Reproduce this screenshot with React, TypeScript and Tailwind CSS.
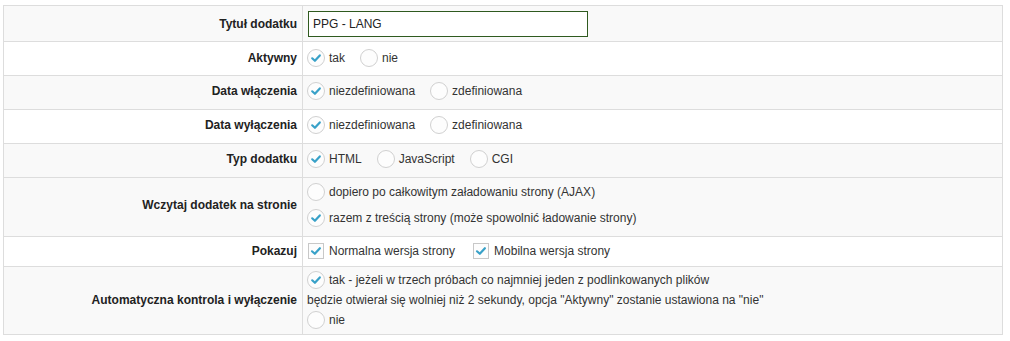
import React from 'react';

const Radio: React.FC<{ checked?: boolean }> = ({ checked }) => (
  <svg width="18" height="18" viewBox="0 0 18 18" className="shrink-0">
    <circle cx="9" cy="9" r="8.5" fill="#fdfdfd" stroke="#d0d0d0" />
    {checked && (
      <path d="M5.2 9.3 L7.9 11.8 L12.8 6.4" fill="none" stroke="#38a1c8" strokeWidth="2.2" strokeLinecap="round" strokeLinejoin="round" />
    )}
  </svg>
);

const Checkbox: React.FC<{ checked?: boolean }> = ({ checked }) => (
  <svg width="16" height="16" viewBox="0 0 16 16" className="shrink-0">
    <rect x="0.5" y="0.5" width="15" height="15" fill="#fdfdfd" stroke="#c8c8c8" />
    {checked && (
      <path d="M4 8.3 L6.8 10.8 L11.9 5.2" fill="none" stroke="#38a1c8" strokeWidth="2.2" strokeLinecap="round" strokeLinejoin="round" />
    )}
  </svg>
);

const Option: React.FC<{ label: string; checked?: boolean }> = ({ label, checked }) => (
  <span className="inline-flex items-center gap-[4px] mr-[15px]">
    <Radio checked={checked} />
    <span>{label}</span>
  </span>
);

const Row: React.FC<{ label: string; gray?: boolean; h: string; pb?: string; children: React.ReactNode }> = ({
  label,
  gray,
  h,
  pb = '',
  children,
}) => (
  <tr className={gray ? 'bg-[#f9f9f9]' : 'bg-white'}>
    <td className={`${h} ${pb} w-[299px] border border-[#dddddd] pr-[5px] text-right font-bold text-[#222]`}>{label}</td>
    <td className={`${pb} border border-[#dddddd] pl-[4px]`}>{children}</td>
  </tr>
);

export default function App() {
  return (
    <div className="w-[1010px] h-[341px] bg-white pt-[5px] pl-[3px] text-[12px] text-[#333] font-['Liberation_Sans',Arial,sans-serif]">
      <table className="w-[1000px] border-collapse">
        <tbody>
          <Row label="Tytuł dodatku" gray h="h-[36px]">
            <input
              readOnly
              value="PPG - LANG"
              className="ml-[1px] w-[280px] h-[26px] border border-[#2f5a1f] bg-white px-[4px] text-[12px] text-[#222] outline-none"
            />
          </Row>
          <Row label="Aktywny" h="h-[34px]" pb="pb-[2px]">
            <div className="flex items-center">
              <Option label="tak" checked />
              <Option label="nie" />
            </div>
          </Row>
          <Row label="Data włączenia" gray h="h-[34px]" pb="pb-[4px]">
            <div className="flex items-center">
              <Option label="niezdefiniowana" checked />
              <Option label="zdefiniowana" />
            </div>
          </Row>
          <Row label="Data wyłączenia" h="h-[34px]" pb="pb-[4px]">
            <div className="flex items-center">
              <Option label="niezdefiniowana" checked />
              <Option label="zdefiniowana" />
            </div>
          </Row>
          <Row label="Typ dodatku" gray h="h-[34px]" pb="pb-[4px]">
            <div className="flex items-center">
              <Option label="HTML" checked />
              <Option label="JavaScript" />
              <Option label="CGI" />
            </div>
          </Row>
          <Row label="Wczytaj dodatek na stronie" gray h="h-[59px]" pb="pb-[5px]">
            <div className="flex flex-col gap-[8px]">
              <Option label="dopiero po całkowitym załadowaniu strony (AJAX)" />
              <Option label="razem z treścią strony (może spowolnić ładowanie strony)" checked />
            </div>
          </Row>
          <Row label="Pokazuj" h="h-[30px]" pb="pb-[1px]">
            <div className="flex items-center pl-[1px]">
              <span className="inline-flex items-center gap-[5px] mr-[18px]">
                <Checkbox checked />
                <span>Normalna wersja strony</span>
              </span>
              <span className="inline-flex items-center gap-[5px]">
                <Checkbox checked />
                <span>Mobilna wersja strony</span>
              </span>
            </div>
          </Row>
          <Row label="Automatyczna kontrola i wyłączenie" gray h="h-[68px]" pb="pb-[2px]">
            <div className="flex flex-col leading-[20px]">
              <Option label="tak - jeżeli w trzech próbach co najmniej jeden z podlinkowanych plików" checked />
              <span>będzie otwierał się wolniej niż 2 sekundy, opcja "Aktywny" zostanie ustawiona na "nie"</span>
              <Option label="nie" />
            </div>
          </Row>
        </tbody>
      </table>
    </div>
  );
}
